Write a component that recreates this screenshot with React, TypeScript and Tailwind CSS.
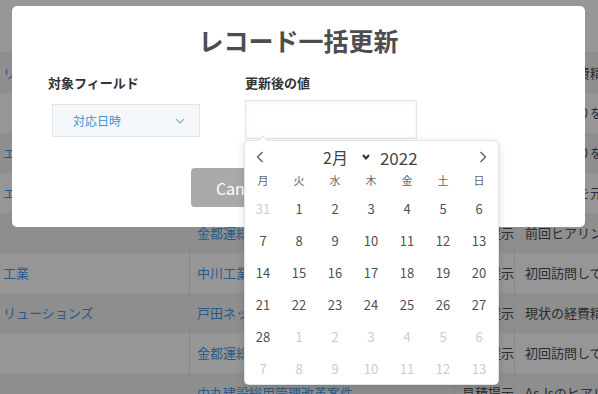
import React from "react";

type Row = { c1: string; c2: string; c3: string; c4: string };

const rows: Row[] = [
  { c1: "リューションズ", c2: "", c3: "", c4: "現状の経費精算" },
  { c1: "", c2: "", c3: "", c4: "前回見積りを元に" },
  { c1: "エンジニアリング", c2: "", c3: "", c4: "前回見積りを確認" },
  { c1: "エンジニアリング", c2: "", c3: "", c4: "前回資料を元に" },
  { c1: "", c2: "金都運総研", c3: "見積提示", c4: "前回ヒアリング" },
  { c1: "工業", c2: "中川工業株式会社", c3: "見積提示", c4: "初回訪問して、" },
  { c1: "リューションズ", c2: "戸田ネットワーク", c3: "見積提示", c4: "現状の経費精算" },
  { c1: "", c2: "金都運総研", c3: "見積提示", c4: "初回訪問して、" },
  { c1: "", c2: "中丸建設総用管理改革案件", c3: "見積提示", c4: "As-Isのヒアリ" },
];

const weekdays = ["月", "火", "水", "木", "金", "土", "日"];

type Day = { d: number; out: boolean };
const weeks: Day[][] = (() => {
  const all: Day[] = [{ d: 31, out: true }];
  for (let i = 1; i <= 28; i++) all.push({ d: i, out: false });
  for (let i = 1; i <= 13; i++) all.push({ d: i, out: true });
  const w: Day[][] = [];
  for (let i = 0; i < 6; i++) w.push(all.slice(i * 7, i * 7 + 7));
  return w;
})();

function Background() {
  return (
    <div className="flex flex-col">
      <div className="h-[53px] bg-[#979797] border-b border-[#8c8c8c]" />
      {rows.map((r, i) => (
        <div
          key={i}
          className={`flex h-[40px] items-center text-[13px] ${i % 2 === 0 ? "bg-[#8e8e8e]" : "bg-[#969696]"}`}
        >
          <div className="w-[190px] h-full flex items-center pl-[3px] border-r border-[#888888] text-[#285a86] whitespace-nowrap overflow-hidden">
            {r.c1}
          </div>
          <div className="w-[265px] h-full flex items-center pl-[7px] border-r border-[#888888] text-[#285a86] whitespace-nowrap overflow-hidden">
            {r.c2}
          </div>
          <div className="w-[60px] h-full flex items-center pl-[7px] border-r border-[#888888] text-[#2c2c2c] whitespace-nowrap overflow-hidden">
            {r.c3}
          </div>
          <div className="flex-1 h-full flex items-center pl-[10px] text-[#2c2c2c] whitespace-nowrap overflow-hidden">
            {r.c4}
          </div>
        </div>
      ))}
    </div>
  );
}

function Calendar() {
  return (
    <div className="absolute left-0 top-[41px] w-[253px] h-[243px] bg-white rounded-[4px] ring-1 ring-[#e4e4e4] shadow-[0_2px_8px_rgba(0,0,0,0.18)]">
      <div className="absolute -top-[4px] left-[14px] w-[8px] h-[8px] rotate-45 bg-white border-l border-t border-[#e4e4e4]" />
      <div className="relative flex items-center h-[32px] pl-[11px] text-[#444]">
        <svg width="8" height="12" viewBox="0 0 8 12" className="shrink-0">
          <polyline points="6.5,1 1.5,6 6.5,11" fill="none" stroke="#555" strokeWidth="1.2" />
        </svg>
        <span className="ml-[59px] text-[16px] leading-none">2月</span>
        <svg width="8" height="6" viewBox="0 0 8 6" className="ml-[14px] shrink-0">
          <polyline points="1,1 4,4.5 7,1" fill="none" stroke="#333" strokeWidth="2" />
        </svg>
        <span className="ml-[10px] text-[17px] leading-none">2022</span>
        <svg width="8" height="12" viewBox="0 0 8 12" className="ml-auto mr-[11px] shrink-0">
          <polyline points="1.5,1 6.5,6 1.5,11" fill="none" stroke="#555" strokeWidth="1.2" />
        </svg>
      </div>
      <div className="grid grid-cols-[repeat(7,36px)] h-[14px] items-center text-[11px] text-[#666] leading-none">
        {weekdays.map((w) => (
          <div key={w} className="text-center">
            {w}
          </div>
        ))}
      </div>
      <div className="mt-[5px] flex flex-col">
        {weeks.map((wk, i) => (
          <div key={i} className="grid grid-cols-[repeat(7,36px)] h-[32px] items-center text-[13px] leading-none">
            {wk.map((d, j) => (
              <div key={j} className={`text-center ${d.out ? "text-[#cccccc]" : "text-[#505050]"}`}>
                {d.d}
              </div>
            ))}
          </div>
        ))}
      </div>
    </div>
  );
}

function Modal() {
  return (
    <div className="absolute left-[12px] top-[6px] w-[573px] h-[221px] bg-white rounded-[5px] flex flex-col">
      <div className="mt-[15px] h-[38px] leading-[38px] text-center text-[25px] font-bold text-[#4d4d4d]">
        レコード一括更新
      </div>
      <div className="mt-[14px] flex pl-[36px]">
        <div className="w-[197px] flex flex-col">
          <div className="h-[20px] leading-[20px] text-[13px] font-bold text-[#333]">対象フィールド</div>
          <div className="mt-[11px] ml-[4px] w-[148px] h-[33px] bg-[#f5f8fb] border border-[#dfe5ea] flex items-center pl-[20px] pr-[14px]">
            <span className="text-[12px] text-[#3d8fd4]">対応日時</span>
            <svg width="10" height="6" viewBox="0 0 10 6" className="ml-auto">
              <polyline points="1,1 5,5 9,1" fill="none" stroke="#7fb2dd" strokeWidth="1.2" />
            </svg>
          </div>
        </div>
        <div className="flex flex-col">
          <div className="h-[20px] leading-[20px] text-[13px] font-bold text-[#333]">更新後の値</div>
          <div className="relative mt-[7px] w-[172px] h-[39px]">
            <div className="w-full h-full bg-white border border-[#e6e6e6] shadow-[inset_0_1px_4px_rgba(0,0,0,0.06)]" />
            <Calendar />
          </div>
        </div>
      </div>
      <div className="mt-[29px] flex justify-center gap-[15px]">
        <div className="w-[100px] h-[39px] rounded-[4px] bg-[#a9a9a9] text-white text-[16px] flex items-center justify-center">
          Cancel
        </div>
        <div className="w-[100px] h-[39px] rounded-[4px] bg-[#3498db] text-white text-[16px] flex items-center justify-center">
          Save
        </div>
      </div>
    </div>
  );
}

export default function App() {
  return (
    <div className="relative w-[598px] h-[394px] overflow-hidden font-['Noto_Sans_CJK_JP','Noto_Sans',sans-serif]">
      <Background />
      <Modal />
    </div>
  );
}
